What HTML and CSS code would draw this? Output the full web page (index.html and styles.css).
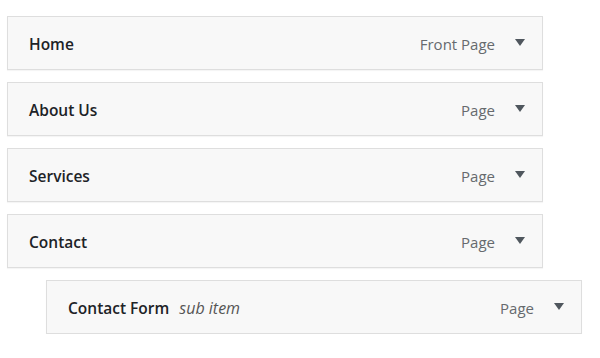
FILE: index.html
```html
<!DOCTYPE html>
<html>
<head>
<meta charset="utf-8">
<link rel="stylesheet" href="styles.css">
</head>
<body>
<div class="menu">
  <div class="item">
    <span class="title">Home</span>
    <span class="type">Front Page</span>
    <span class="arrow"></span>
  </div>
  <div class="item">
    <span class="title">About Us</span>
    <span class="type">Page</span>
    <span class="arrow"></span>
  </div>
  <div class="item">
    <span class="title">Services</span>
    <span class="type">Page</span>
    <span class="arrow"></span>
  </div>
  <div class="item">
    <span class="title">Contact</span>
    <span class="type">Page</span>
    <span class="arrow"></span>
  </div>
  <div class="item sub">
    <span class="title">Contact Form</span>
    <span class="note">sub item</span>
    <span class="type">Page</span>
    <span class="arrow"></span>
  </div>
</div>
</body>
</html>
```
FILE: styles.css
```css
html, body {
  margin: 0;
  padding: 0;
  background: #ffffff;
}
body {
  font-family: "Open Sans", "Noto Sans", sans-serif;
}
.menu {
  display: flex;
  flex-direction: column;
  gap: 12px;
  padding: 16px 0 0 7px;
}
.item {
  box-sizing: border-box;
  width: 536px;
  height: 54px;
  display: flex;
  align-items: center;
  padding: 2px 17px 0 21px;
  background: #f8f8f8;
  border: 1px solid #dedede;
  box-shadow: 0 1px 1px rgba(0,0,0,0.04);
}
.item.sub {
  margin-left: 39px;
}
.title {
  font-size: 15.5px;
  font-weight: 600;
  color: #1d2327;
}
.note {
  margin-left: 10px;
  font-size: 16px;
  font-style: italic;
  color: #555;
}
.type {
  margin-left: auto;
  font-size: 15px;
  color: #666a6e;
}
.arrow {
  margin-left: 20px;
  width: 0;
  height: 0;
  border-left: 5px solid transparent;
  border-right: 5px solid transparent;
  border-top: 7px solid #50575e;
  margin-top: -3px;
}
```
